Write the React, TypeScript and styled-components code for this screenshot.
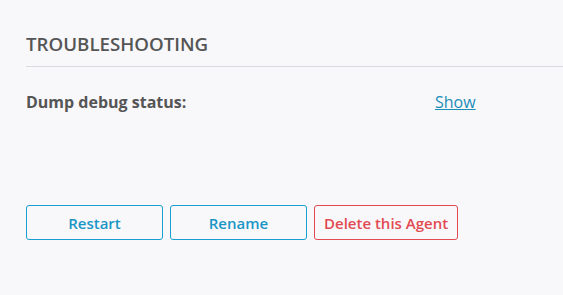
import styled, { createGlobalStyle } from "styled-components";

const GlobalStyle = createGlobalStyle`
  body {
    margin: 0;
    background: #f8f8fa;
    font-family: "Open Sans", "Noto Sans", sans-serif;
    color: #555;
  }
`;

const App = () => {
  return (
    <>
      <GlobalStyle />
      <Section>
        <Title>TROUBLESHOOTING</Title>

        <Row>
          <Label>Dump debug status:</Label>
          <ShowLink href="#">Show</ShowLink>
        </Row>

        <Actions>
          <Button>Restart</Button>
          <Button>Rename</Button>
          <Button danger>Delete this Agent</Button>
        </Actions>
      </Section>
    </>
  );
};

export default App;

const Section = styled.div`
  padding: 31px 0 0 26px;
`;

const Title = styled.div`
  font-size: 18.7px;
  font-weight: 600;
  line-height: 25px;
  color: #555;
  padding-bottom: 10px;
  border-bottom: 1px solid #dcdce0;
`;

const Row = styled.div`
  display: grid;
  grid-template-columns: 409px auto;
  align-items: center;
  margin-top: 24px;
  font-size: 16px;
  line-height: 22px;
`;

const Label = styled.span`
  font-weight: 700;
  color: #555;
`;

const ShowLink = styled.a`
  color: #1b8db8;
  text-decoration: underline;
  justify-self: start;
`;

const Actions = styled.div`
  display: flex;
  gap: 7px;
  margin-top: 92px;
`;

const Button = styled.button<{ danger?: boolean }>`
  height: 35px;
  min-width: 137px;
  padding: 0 9px;
  background: transparent;
  border: 1px solid ${(p) => (p.danger ? "#e24a52" : "#1aa0d0")};
  border-radius: 3px;
  color: ${(p) => (p.danger ? "#e24a52" : "#1a96c6")};
  font-family: "Open Sans", "Noto Sans", sans-serif;
  font-size: 15px;
  font-weight: 600;
  cursor: pointer;
`;
